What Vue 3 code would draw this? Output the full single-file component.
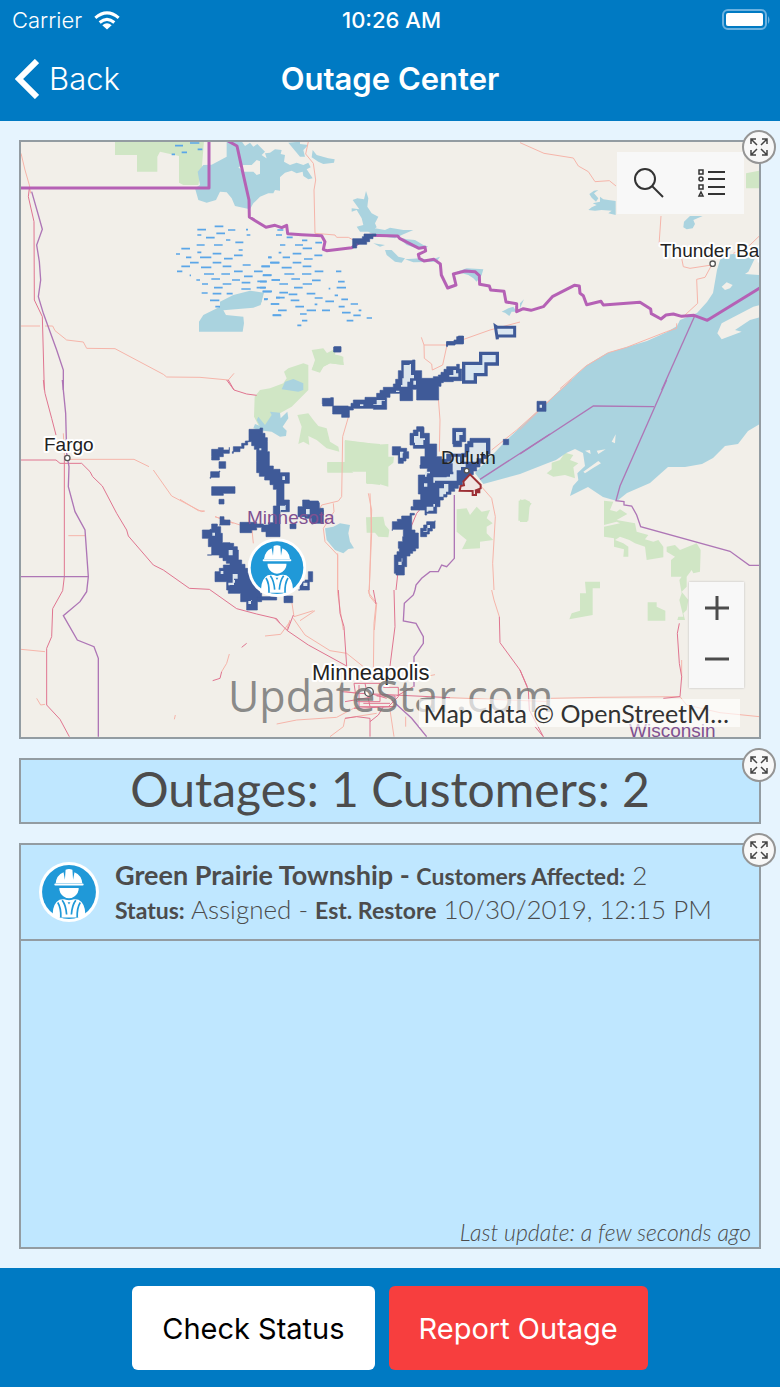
<script setup>
const wetlandWest = [
  [465, 47, 24], [510, 39, 28], [485, 67, 16], [455, 73, 10], [533, 58, 14], [584, 289, 26], [532, 299, 26], [624, 300, 22],
  [678, 299, 6], [532, 315, 12], [589, 310, 26], [680, 315, 11], [558, 323, 26], [618, 330, 13], [646, 337, 24], [530, 345, 24],
  [582, 345, 26], [484, 356, 26], [656, 360, 12], [468, 372, 12], [532, 367, 12], [578, 371, 26], [642, 376, 26], [498, 382, 16],
  [540, 382, 34], [612, 386, 26], [745, 382, 10], [510, 398, 26], [578, 398, 26], [752, 398, 26], [484, 409, 26], [543, 412, 31],
  [608, 409, 26], [668, 405, 24], [725, 409, 24], [471, 424, 16], [642, 424, 26], [702, 424, 26], [552, 432, 30], [604, 432, 26],
  [672, 439, 26], [729, 435, 26], [509, 436, 4], [574, 447, 26], [529, 450, 11], [636, 450, 24], [712, 454, 28], [756, 450, 24],
  [546, 462, 18], [608, 462, 26], [665, 458, 26], [582, 473, 26], [710, 473, 26], [664, 477, 28], [545, 489, 18], [578, 491, 26],
  [620, 491, 18], [728, 484, 28], [570, 511, 28], [586, 530, 14], [732, 507, 12], [753, 522, 24], [758, 555, 24], [768, 503, 12],
]
const wetlandEast = [
  [52, 300, 18], [48, 315, 18], [80, 322, 18], [126, 331, 16], [166, 338, 20], [60, 345, 16], [105, 345, 24], [128, 355, 28],
  [56, 368, 8], [98, 371, 26], [163, 376, 24], [24, 382, 10], [68, 382, 22], [132, 387, 26], [30, 398, 28], [98, 398, 26],
  [4, 409, 26], [65, 413, 30], [128, 409, 26], [164, 424, 26], [228, 424, 16], [8, 436, 26], [73, 432, 30], [126, 432, 28],
  [94, 447, 26], [34, 450, 26], [156, 451, 26], [234, 455, 20], [0, 455, 20], [58, 462, 26], [128, 462, 28], [230, 473, 28],
  [102, 473, 26], [0, 473, 18], [206, 476, 5], [8, 485, 26], [58, 488, 26], [140, 491, 26], [86, 493, 26], [224, 496, 10],
  [48, 503, 26], [164, 504, 24], [244, 508, 20], [12, 508, 10], [92, 511, 26], [196, 514, 26], [32, 522, 26], [164, 523, 8],
  [272, 522, 22], [106, 530, 26], [236, 530, 18], [54, 541, 26], [140, 541, 28], [186, 541, 24], [296, 541, 8], [246, 548, 26],
  [38, 556, 26], [280, 556, 22], [120, 552, 20], [320, 564, 16], [126, 572, 16], [260, 572, 20], [112, 586, 12],
]
const dashes = (rows) => rows.map(([x, y, w]) => `M${x} ${y}h${w}`).join('')

// Territory follows square parcels, so slanted edges are drawn as steps.
const stepped = (rings) => rings.map((ring) => {
  const n = ring.split(' ').map(Number)
  const points = []
  for (let i = 0; i < n.length; i += 2) points.push([n[i], n[i + 1]])
  let d = `M${points[0][0]} ${points[0][1]}`
  points.forEach(([x, y], i) => {
    const [nx, ny] = points[(i + 1) % points.length]
    const steps = Math.max(1, Math.round(Math.min(Math.abs(nx - x), Math.abs(ny - y)) / 9))
    for (let s = 1; s <= steps; s++) {
      d += `H${Math.round(x + ((nx - x) * s) / steps)}V${Math.round(y + ((ny - y) * s) / steps)}`
    }
  })
  return d + 'Z'
}).join('')

const borderArea = stepped([
  '278 326 307 320 312 312 348 318 320 343 292 340 290 354 278 352',
  '221 651 242 651 242 666 221 666',
  '560 635 585 632 590 620 610 618 610 640 585 645 562 650',
])
const westArea = stepped([
  '207 88 240 84 248 100 262 125 262 155 268 155 268 198 280 208 300 218 328 218 328 250 312 250 312 300 328 300 328 335 300 345 300 410 258 410 258 395 245 395 245 382 215 398 180 385 180 367 230 372 250 375 280 360 280 318 290 300 290 268 270 240 238 218 230 185 230 148 215 125 180 155 157 160 160 140 185 130 207 115',
  '95 148 115 143 130 150 148 142 148 160 130 170 118 180 95 170',
  '117 185 137 185 137 205 117 205',
  '92 215 120 213 118 232 90 235',
  '95 260 165 260 165 280 130 280 130 286 95 286',
  '117 298 132 298 132 312 117 312',
  '120 350 130 350 132 360 150 360 150 375 118 375',
  '67 390 90 388 95 372 112 380 122 400 127 428 150 430 172 450 175 480 195 505 210 530 240 580 245 605 232 630 200 630 200 605 182 605 182 580 145 570 140 545 115 545 105 515 130 495 150 490 118 465 82 465 95 440 85 415 67 408',
  '354 320 368 315 368 300 388 303 415 308 418 325 430 340 430 370 400 372 395 355 375 350 354 350',
  '330 372 348 372 348 386 330 386',
  '385 515 398 535 398 545 388 570 355 570 360 545 375 540',
  '312 588 330 588 338 608 320 608',
  '230 590 290 590 290 600 230 600',
])
const eastArea = stepped([
  '37 265 62 263 70 288 115 290 130 270 165 262 200 250 220 232 250 222 257 208 265 182 275 152 307 150 315 182 335 188 335 205 370 200 385 195 410 170 440 163 455 190 455 212 430 215 400 218 386 240 386 270 320 270 320 238 308 238 308 272 270 268 270 250 240 262 230 298 190 295 130 300 118 322 95 312 68 308 68 288 38 282',
  '410 95 432 90 445 78 460 80 460 102 435 104 412 108',
  '73 110 93 110 93 125 73 125',
  '580 388 596 388 596 404 580 404',
  '681 274 708 274 708 304 681 304',
  '300 370 320 350 340 352 342 370 358 375 358 402 380 405 380 440 410 455 410 432 455 430 465 402 480 385 540 386 540 432 520 460 480 505 445 535 400 570 380 610 350 615 345 600 315 600 303 590 310 570 332 570 332 552 325 525 325 495 350 495 352 475 330 465 332 440 345 435 345 415 310 405',
  '247 410 272 415 290 425 296 445 280 460 265 458 265 435 247 435',
  '428 355 467 355 467 395 455 410 430 402',
  '247 635 262 628 275 618 300 610 313 615 305 660 325 678 325 715 300 738 290 770 283 795 258 790 253 735 268 715 265 695 278 680 280 658 247 662',
  '332 655 350 635 375 632 375 655 350 680 332 680',
  '0 575 25 575 25 600 40 605 40 615 0 615',
])
const westGaps = stepped([
  '300 317 315 315 317 330 302 335', '378 327 407 327 407 343 385 343', '146 450 158 450 158 466 146 466',
  '158 522 173 516 173 536 162 548', '145 548 165 540 162 555 150 556', '97 398 105 398 105 407 97 407',
  '307 229 315 229 315 240 307 240', '122 513 130 513 130 522 122 522', '370 548 384 548 382 558 370 558',
  '238 145 244 145 244 151 238 151', '205 603 215 600 213 612 205 612',
])
const eastGaps = stepped([
  '281 165 299 162 303 195 312 205 300 215 292 230 273 225 277 205', '150 283 200 270 225 272 215 285 190 283 160 288',
  '418 195 430 180 445 200', '312 378 325 365 330 385 345 390 340 405 315 398', '438 366 458 366 458 375 448 392 438 392',
  '478 412 490 398 528 400 528 435 500 455 462 442', '370 502 410 500 430 485 428 460 412 455 425 440 450 442 450 462 480 462 440 490 440 512 375 518',
  '388 535 402 522 415 545 400 560', '350 590 375 582 370 602 355 605', '340 663 360 645 352 665',
  '265 755 277 745 275 765', '689 284 696 284 696 293 689 293', '270 425 280 430 278 443 270 438',
  '345 485 360 490 350 500', '342 520 352 520 352 530 342 530', '258 242 268 236 268 246', '310 212 318 212 318 224 310 224',
])
</script>

<template>
  <div class="app">
    <header class="header">
      <div class="status">
        <div class="carrier">
          <span>Carrier</span>
          <svg class="wifi" viewBox="0 0 78 56" aria-hidden="true">
            <path d="M39 55 25 42Q39 31 53 42Z" fill="#fff" />
            <path d="M17 34Q39 15 61 34M4 20Q39-10 74 20" fill="none" stroke="#fff" stroke-width="9" />
          </svg>
        </div>
        <time class="clock">10:26 AM</time>
        <svg class="battery" viewBox="0 0 49 22" aria-hidden="true">
          <rect x="1" y="1" width="43" height="19" rx="5" fill="none" stroke="#6cb2e0" stroke-width="2" />
          <rect x="4" y="4" width="37" height="13" rx="2" fill="#fff" />
          <path d="M46 7q3 4 0 8z" fill="#6cb2e0" />
        </svg>
      </div>
      <nav class="nav">
        <a class="back" href="#">
          <svg viewBox="0 0 24 40" aria-hidden="true"><path d="M22 2 4 20 22 38" fill="none" stroke="#fff" stroke-width="6" /></svg>
          Back
        </a>
        <h1>Outage Center</h1>
      </nav>
    </header>

    <main class="main">
      <section class="panel map-panel" aria-label="Outage map">
        <svg class="map" viewBox="63 426 2214 1785">
          <defs>
            <symbol id="worker" viewBox="0 0 176 176">
              <circle cx="88" cy="88" r="88" fill="#fff" />
              <circle cx="88" cy="88" r="79" fill="#2099d8" />
              <path d="M49 62q2-23 23-32l4 22 2-29q10-5 20 0l2 29 4-22q21 9 23 32z" fill="#fff" />
              <path d="M48 66h80" stroke="#fff" stroke-width="6" stroke-linecap="round" />
              <path d="M40 153q1-32 20-42 12-5 28 2 16-7 28-2 19 10 20 42-8 6-16 10H56q-8-4-16-10Z" fill="#fff" />
              <path d="M57 74h62q1 19-14 29-17 12-34 0-15-10-14-29Z" fill="#fff" stroke="#2099d8" stroke-width="5" />
              <path d="M55 119q10 16 9 44M121 119q-10 16-9 44M68 112q11 14 13 42M108 112q-11 14-13 42" fill="none" stroke="#2099d8" stroke-width="5" />
              <path d="M77 113h22l-11 30z" fill="#fff" />
              <path d="m84 118 4 7 4-7z" fill="#2099d8" />
            </symbol>
          </defs>
          <rect x="63" y="426" width="2214" height="1785" fill="#f2efe9" />

          <!-- woodland -->
          <g class="wood">
            <path transform="translate(60 390)" d="M285 32H552L545 120 535 165H490L477 158V78L420 65 412 80V125H351V75H285Z" />
            <path transform="translate(780 390)" d="M155 660 190 655 200 668 245 678 252 705 210 700 190 710 180 728 155 720 165 690ZM72 725 85 715 130 700 145 705 145 780 125 800 95 830 60 850 30 880 0 895-18 860-16 800 0 780 30 775 70 760 80 745Z" />
            <path transform="translate(540 1200)" d="M240 0 305 0 300 40 240 35ZM352 45 385 40 400 60 415 78 440 85 450 125 475 140 478 155 440 145 410 120 385 108 388 135 370 125 355 132 365 80ZM495 120 558 128 600 132V255L558 250V195L500 200 520 218H442V186H495Z" />
            <path transform="translate(930 930)" d="M104 392 180 400 180 405 235 402V440L252 440 250 458 235 470 235 530 200 520 170 522V485H52V458H104ZM10 120 50 130 78 115 75 135 100 140 100 165 60 160 40 170 30 185 5 178 20 150ZM168 622 220 620 225 645 238 660 235 682 205 680 195 668 170 668ZM440 598 470 595 480 615 500 590 515 605 540 600 530 625 548 640 530 650 530 670 550 690 510 695 510 715 456 718 470 690 440 665ZM626 572 645 568 660 575 655 632H625Z" />
            <path transform="translate(1560 1140)" d="M0 358 35 370 22 390 22 426H0ZM80 280 95 268 95 248 120 240 135 218 160 225 150 240 175 250 160 262 165 295 135 285 100 290ZM252 362 280 365 270 390 290 395 300 388 322 402 290 420 345 430 350 455 385 465 375 478 400 485 415 480 430 500 430 532 380 540 375 500 345 490 328 480 300 470 285 480 310 490 325 500 325 530 310 530 312 508 282 500V475L252 470V440L300 430 290 425 252 435ZM440 500 465 495 480 510 530 490 542 510 540 575 520 580 515 570 500 590 500 620 485 635 505 660 500 690 490 700 495 720H472L475 710 490 710 478 660 485 640 478 600 485 590H453V540L465 530 440 515ZM195 605H240V625H218V705L148 718 155 700 180 692V640H198ZM383 667H410V680L436 692V722H383Z" />
            <path transform="translate(1560 390)" d="M678 130 720 122V175H678Z" />
          </g>

          <!-- lakes -->
          <g class="water">
            <path transform="translate(60 390)" d="M620 34 665 34 675 48 690 38 700 50 712 42 735 65 725 75 738 85 725 95 710 90 695 105 670 105 655 112 670 125 700 125 710 135 725 130 725 115 745 115 750 100 780 78V182L765 180 760 190 745 190 720 200 700 220 690 238 645 228 635 205 620 187 600 185 588 210 560 218 535 210 525 175 540 165 533 125 550 105 575 104 620 80Z" />
            <path transform="translate(60 390)" d="M600 515 640 495 690 482 732 488 722 525 700 533 610 541 618 555 670 560 672 580 668 605H537V575L550 555 600 530Z" />
            <path transform="translate(780 390)" d="M0 78 20 85 15 70 30 68 45 58 65 60 62 72 75 75 72 95 90 105 110 98 130 105 145 98 152 112 140 118 158 145 145 148 130 138 128 125 110 130 95 122 75 128 50 150 28 182 0 192ZM85 38 120 35 120 42 145 45 130 60 135 80 120 80 105 62ZM158 60 170 75 205 85 224 88 222 98 190 102 175 95 155 82Z" />
            <path transform="translate(780 390)" d="M318 183 325 205 322 230 335 250 355 260 345 280 350 292 330 305 300 305 290 290 310 285 305 265 290 240 275 245 275 235 298 238 285 220 278 210 292 205 312 208ZM325 305 345 295 375 300 390 293 430 300 460 300 425 315 405 325 345 316ZM375 360 395 360 415 380 435 385 425 398 405 395 380 375ZM412 320 440 328 465 330 490 345 505 350 480 358 440 345ZM435 388 480 385 510 390 540 380 530 395 460 397ZM725 545 745 535 760 530 770 545 755 545 748 558 735 548ZM340 340 375 345 360 350ZM590 425 620 415 670 418 665 435 650 455 640 445 625 435ZM0 490 8 488 5 515 0 520Z" />
            <path transform="translate(1560 390)" d="M208 192 222 182 235 180 222 190 235 205 228 215 215 203ZM240 200 250 208 265 210 287 213V255L265 250 275 242 245 240 225 242 205 240 215 232 230 225 218 220 240 215ZM492 275 510 258H548L520 270 525 282 518 295 500 298 490 292ZM0 520 12 508 0 535Z" />
            <path transform="translate(780 1140)" d="M75 5 100-3 130 10 130 30 115 35 65 28Z" />
            <path transform="translate(540 1200)" d="M225 72 240 78 230 60 235 50 255 75 275 45 270 35 300 38 302 55 322 35 325 55 308 80 320 92 318 108 300 110 275 95 250 92 220 85ZM435 385 460 380 480 370 510 375 505 400 510 425 522 445 505 447 490 460 465 450 440 420Z" />
            <path d="M1680 1170 1761 1095 1821 1059 1941 1023 2001 996 2031 978 2040 960 2091 939 2121 906 2139 879 2151 810 2160 780 2175 765 2199 762 2240 768 2265 774 2255 795 2245 815 2235 822 2280 825V1272L2244 1293 2214 1332 2175 1338 2139 1374 2106 1392 2055 1401 2004 1401 1950 1449 1881 1479 1851 1503 1809 1491 1764 1461 1710 1488 1719 1458 1735 1440 1732 1420 1755 1398 1749 1359 1725 1347 1700 1358 1668 1380 1644 1389 1560 1422 1450 1452 1425 1419 1520 1320 1680 1170Z" />
            <path class="land" transform="translate(1560 390)" d="M605 470 620 457 638 465 630 475 615 480ZM720 525 700 530 605 580 592 610 605 628 665 605 645 600 690 570 720 562Z" />
            <path class="land" transform="translate(1560 1140)" d="M275 185 287 163 285 190ZM195 212 210 210 212 222ZM230 212 257 208 235 222ZM190 275 235 243 243 250 218 265 195 280Z" />
          </g>
          <path class="marsh" transform="translate(60 390)" :d="dashes(wetlandWest)" />
          <path class="marsh" transform="translate(780 390)" :d="dashes(wetlandEast)" />

          <!-- roads -->
          <g class="road">
            <path transform="translate(60 390)" d="M3 70 15 120 28 165 32 190M3 588H60M75 588H98L105 602 140 630 190 636 200 655 285 656 430 733 440 741 540 742 625 750 642 730" />
            <path transform="translate(780 390)" d="M145 35 137 72 160 100 167 150 162 180 165 310 225 315 230 322 265 322 280 330M484 622 492 645 560 645M492 645 493 685 515 702 517 720 548 705 560 650M600 632 690 600 780 576" />
            <path transform="translate(1560 390)" d="M0 38 72 70 160 84 175 108 205 125 225 155 268 152 288 168M423 258 417 345M485 385 490 410 510 415 575 405 555 442 530 448 533 520 495 555M640 370 690 345 718 318M470 580 470 595 440 605 320 652 265 668 198 708 120 776" />
            <path transform="translate(60 1140)" d="M130 160 134 240M3 808 75 815M150 238H342L387 260M400 270 455 348M455 348 545 395 555 393M585 410 640 430M145 467H195M628 822 620 850 605 875M50 955 62 975 75 973M466 1005 463 1018" />
            <path transform="translate(540 1200)" d="M507 45 488 110 485 290 475 303 425 315 415 335M460 310 462 335 430 385 435 425 473 465V580L490 690M570 280 575 400 567 580 590 610 583 690M0 298 55 332 72 333M105 350 180 375 215 380 220 430M333 590 342 650 400 632M330 660 320 690" />
            <path transform="translate(930 930)" d="M385 265 390 330 388 425M510 525 545 565 556 620 548 760 552 840M720 270 620 360 545 420M175 550 185 600 178 840M83 730V840" />
            <path transform="translate(630 1770)" d="M475 0 480 20 498 42 492 100 490 250M845 0 852 30 868 80M165 138 212 133 240 95M315 62 270 92M250 85 285 135 360 182 410 190 460 230M200 402 260 390 380 382 440 350M440 310 385 300M360 440 400 410 405 385 500 370M540 360 552 440M587 380V410M720 323 1020 335M655 258 675 254" />
            <path transform="translate(1560 1140)" d="M92 955 240 952 480 950M485 840V900M480 950 500 975 600 998 718 1010M155 0 100 50 0 148" />
          </g>
          <g class="highway">
            <path transform="translate(60 390)" d="M28 175 25 200 42 275 43 510 67 560 73 780M625 750 642 780" />
            <path transform="translate(60 1140)" d="M70 0 75 40 95 115 108 165M3 240H108L120 250H185L210 275 218 290 247 318 290 400 320 450 325 468 400 555 430 570 508 625 568 628 650 686 710 702 770 716 780 730M133 228V590L128 632 98 686 95 770 80 805V975L120 1018 148 1070M620 0 642 30 680 42 710 46M665 802 680 790M578 902 600 895 605 875" />
            <path transform="translate(630 1770)" d="M195 85 232 122 295 165 410 228M385 0 390 70 402 110 410 228M552 0 555 110 540 228M868 80 870 158 930 240 955 300 958 360 1000 440M232 122 250 75M490 0 498 42" />
            <path transform="translate(630 1770)" d="M432 280H510V335H440ZM447 285V350H555V318H500M465 280 480 350M520 292H565V320L535 350M480 310 530 325M405 335 480 322M432 355 550 350M405 385 440 380 480 385V440M480 395 505 375 520 350M460 340 540 340M395 305 450 310 720 323M610 290 560 318" />
            <path transform="translate(930 930)" d="M435 515 360 510M258 840 270 730 320 610 380 540" />
            <path transform="translate(1560 1140)" d="M478 730 472 760 478 850 485 890 480 950 430 955M0 870 22 920M45 1040 70 1070" />
          </g>

          <!-- state and national borders -->
          <g class="state">
            <path transform="translate(60 390)" d="M35 185 55 255 67 298 50 345 58 395 62 450 55 500 70 550 110 660 130 720V780" />
            <path transform="translate(60 1140)" d="M127 0 137 100 140 220 147 260 145 320 165 395 195 450 205 590 200 635 180 665 130 707 172 780 222 800 235 835V1070M3 590H205" />
            <path transform="translate(930 930)" d="M510 508 720 372M433 555V745L410 770 395 765 385 785 360 785 335 805 318 825 315 840" />
            <path transform="translate(630 1770)" d="M615 0 610 15 583 40 580 93 618 100 640 140V160L612 200V290M545 330 605 385 650 440" />
            <path transform="translate(1560 390)" d="M523 560 425 780" />
            <path transform="translate(1560 1140)" d="M440 0 300 318 288 362 312 365V375L335 378 350 405 362 440 630 514 688 556H718M0 222 220 78 402 80" />
          </g>
          <path class="nation" d="M60 564H627V423M684 423 711 438 729 520 747 600 748 651 798 682 825 676 845 683 860 676 863 701 905 704 965 707 975 725 970 748 980 752 1055 743 1110 706 1193 708 1200 716 1257 745 1275 742 1277 753 1255 763 1258 775 1272 783 1302 778 1321 792 1324 825 1343 864 1368 855 1360 822 1395 813 1425 815 1438 827 1439 853 1468 858 1472 870 1512 874 1518 906 1550 911V935L1570 926 1593 931 1630 920 1657 890 1723 856 1738 858 1740 880 1750 887 1760 914 1803 904 1810 915 1920 907 1952 927 1954 941 1983 957 1998 945 2020 942 2045 949 2082 946 2122 961 2280 864" />

          <!-- service territory -->
          <g transform="translate(780 390)">
            <path class="area" :d="borderArea" />
            <path class="outline" d="M706 588 712 592H764V618H712V628Z" />
          </g>
          <g transform="translate(540 1200)">
            <path class="area" :d="westArea" />
            <path class="pale" :d="westGaps" />
          </g>
          <g transform="translate(930 930)">
            <path class="area" :d="eastArea" />
            <path class="pale" :d="eastGaps" />
            <path class="outline wide" d="M461 160H512V130H562V162H528V194H496V216H461Z" />
            <path class="alert" d="M449 542 452 528 462 526 460 515 480 493 512 525V535L495 542H508V547H498V555H488V543Z" />
          </g>

          <!-- place names -->
          <g class="places">
            <text x="132" y="1353">Fargo</text>
            <text x="1980" y="770">Thunder Bay</text>
            <text class="faint" x="1323" y="1392">Duluth</text>
            <text class="region" x="741" y="1572">Minnesota</text>
            <text class="region" x="1887" y="2211">Wisconsin</text>
            <text class="city" x="936" y="2040">Minneapolis</text>
          </g>
          <g class="dots">
            <circle cx="202" cy="1374" r="8" />
            <circle cx="2138" cy="791" r="8" />
            <circle cx="1400" cy="1412" r="7" />
            <circle cx="1107" cy="2076" r="13" />
          </g>
          <text class="watermark" x="684" y="2136">UpdateStar.com</text>
          <use href="#worker" x="743" y="1615" width="176" height="176" />
        </svg>

        <div class="tools">
          <button type="button" aria-label="Search">
            <svg viewBox="0 0 32 32"><g fill="none" stroke="#333" stroke-width="2"><circle cx="12" cy="12" r="10" /><path d="m19 19 11 11" /></g></svg>
          </button>
          <button type="button" aria-label="Legend">
            <svg viewBox="0 0 32 32"><g fill="none" stroke="#333" stroke-width="2"><path d="M12 5h17M12 12h17M12 20h17M12 27h17" /><path d="M3 3h4v4H3zM3 18h4v4H3zM5 25l2 4H3z" stroke-width="1.5" /><circle cx="5" cy="12" r="2" stroke-width="1.5" /></g></svg>
          </button>
        </div>
        <div class="zoom">
          <button type="button" aria-label="Zoom in"><svg viewBox="0 0 24 24"><path d="M0 12h24M12 0v24" stroke="#4c4c4c" stroke-width="3" /></svg></button>
          <button type="button" aria-label="Zoom out"><svg viewBox="0 0 24 24"><path d="M0 12h24" stroke="#4c4c4c" stroke-width="3" /></svg></button>
        </div>
        <div class="credit">Map data © OpenStreetM…</div>
        <button class="expand" type="button" aria-label="Expand map">
          <svg viewBox="0 0 20 20"><path id="arrows" d="M2 7V2h5M2 2l6 6M13 2h5v5M18 2l-6 6M2 13v5h5M2 18l6-6M13 18h5v-5M18 18l-6-6" /></svg>
        </button>
      </section>

      <section class="panel summary">
        <h2>Outages: 1 Customers: 2</h2>
        <button class="expand" type="button" aria-label="Expand summary"><svg viewBox="0 0 20 20"><use href="#arrows" /></svg></button>
      </section>

      <section class="panel list">
        <article class="item">
          <svg class="badge" viewBox="0 0 176 176" aria-hidden="true"><use href="#worker" width="176" height="176" /></svg>
          <div>
            <p><b class="place">Green Prairie Township - </b><b>Customers Affected:</b> 2</p>
            <p><b>Status:</b> Assigned - <b>Est. Restore</b> 10/30/2019, 12:15 PM</p>
          </div>
        </article>
        <p class="updated">Last update: a few seconds ago</p>
        <button class="expand" type="button" aria-label="Expand outage list"><svg viewBox="0 0 20 20"><use href="#arrows" /></svg></button>
      </section>
    </main>

    <footer class="footer">
      <button class="action" type="button">Check Status</button>
      <button class="action report" type="button">Report Outage</button>
    </footer>
  </div>
</template>

<style>
body {
  margin: 0;
}
</style>

<style scoped>
.app {
  min-height: 100vh;
  display: flex;
  flex-direction: column;
  background: #e6f4fe;
  color: #4c4c4c;
  font-family: Lato, "Open Sans", sans-serif;
}
button {
  padding: 0;
  border: 0;
  background: none;
  font: inherit;
  color: inherit;
  display: flex;
  align-items: center;
  justify-content: center;
}
h1, h2, p {
  margin: 0;
}
.header {
  height: 121px;
  background: #007ac3;
  color: #fff;
  font-family: Inter, "Liberation Sans", sans-serif;
}
.status {
  height: 40px;
  padding: 0 9px 0 12px;
  display: grid;
  grid-template-columns: 1fr auto 1fr;
  align-items: center;
  font-size: 22px;
}
.carrier {
  display: flex;
  align-items: center;
  gap: 12px;
  font-weight: 300;
}
.wifi {
  width: 26px;
  height: 19px;
}
.clock {
  font-weight: 500;
}
.battery {
  width: 49px;
  height: 22px;
  justify-self: end;
}
.nav {
  height: 77px;
  display: grid;
  grid-template-columns: 1fr auto 1fr;
  align-items: center;
}
.nav h1 {
  font-size: 31px;
  font-weight: 600;
}
.back {
  padding-left: 15px;
  display: flex;
  align-items: center;
  gap: 10px;
  color: #fff;
  font-size: 31px;
  font-weight: 300;
  text-decoration: none;
}
.back svg {
  width: 24px;
  height: 40px;
}
.main {
  flex: 1;
  padding: 19px;
  display: flex;
  flex-direction: column;
  gap: 19px;
}
.panel {
  position: relative;
  border: 2px solid #939ca2;
  background: #bfe7ff;
}
.map {
  display: block;
  width: 100%;
}
.wood { fill: #d0e6c5; }
.water { fill: #aad3df; }
.water .land { fill: #f2efe9; }
.marsh { stroke: #5ba6e8; stroke-width: 5; }
.road { fill: none; stroke: #f6b5aa; stroke-width: 3; }
.highway { fill: none; stroke: #e07590; stroke-width: 3; }
.state { fill: none; stroke: #ae76b6; stroke-width: 4; }
.nation { fill: none; stroke: #b561b5; stroke-width: 9; stroke-linejoin: round; }
.area { fill: #3f5a98; stroke: #3f5a98; stroke-width: 2; }
.pale { fill: #dbe4ec; }
.outline { fill: #dbe7f1; stroke: #3f5a98; stroke-width: 9; }
.wide { stroke-width: 10; }
.alert { fill: #f1e5e3; stroke: #9c2f35; stroke-width: 6; }
.places {
  fill: #222;
  stroke: #fff;
  stroke-width: 12;
  stroke-linejoin: round;
  paint-order: stroke;
  font-family: "Liberation Sans", Arial, sans-serif;
  font-size: 57px;
}
.places .city { font-size: 66px; }
.places .faint { stroke: none; }
.places .region { stroke: none; fill: #805191; }
.dots { fill: #fff; stroke: #555; stroke-width: 4; }
.watermark {
  font-family: "Open Sans", "Noto Sans", sans-serif;
  font-size: 129px;
  fill: #737373;
  fill-opacity: 0.82;
}
.tools {
  position: absolute;
  top: 10px;
  right: 15px;
  width: 127px;
  height: 62px;
  display: flex;
  background: #f8f8f8;
}
.tools button {
  flex: 1;
}
.tools svg {
  width: 32px;
  height: 32px;
}
.zoom {
  position: absolute;
  right: 15px;
  bottom: 49px;
  width: 55px;
  height: 102px;
  padding-bottom: 4px;
  display: flex;
  flex-direction: column;
  background: #f8f8f8;
  box-shadow: 0 0 2px #bbb;
}
.zoom button {
  flex: 1;
}
.zoom svg {
  width: 24px;
  height: 24px;
}
.credit {
  position: absolute;
  right: 19px;
  bottom: 10px;
  padding: 0 11px 0 5px;
  background: rgba(255, 255, 255, 0.65);
  color: #323232;
  font-size: 25px;
  line-height: 28px;
}
.expand {
  position: absolute;
  top: -12px;
  right: -17px;
  width: 34px;
  height: 34px;
  border: 2px solid #959595;
  border-radius: 50%;
  background: #f8f8f8;
}
.expand svg {
  width: 20px;
  height: 20px;
  fill: none;
  stroke: #444;
  stroke-width: 1.5;
}
.summary h2 {
  padding-bottom: 4px;
  font-size: 48px;
  font-weight: 400;
  line-height: 58px;
  text-align: center;
}
.list {
  flex: 1;
  display: flex;
  flex-direction: column;
}
.item {
  padding: 13px 18px;
  display: flex;
  align-items: center;
  gap: 16px;
  border-bottom: 2px solid #939ca2;
  font-size: 26px;
  font-weight: 300;
  line-height: 34px;
}
.item p {
  height: 34px;
}
.item b {
  font-size: 23px;
  font-weight: 700;
}
.item .place {
  font-size: 27px;
}
.badge {
  flex: none;
  width: 60px;
  height: 60px;
}
.updated {
  margin-top: auto;
  padding: 0 8px 3px;
  text-align: right;
  font-size: 23px;
  font-style: italic;
  font-weight: 300;
  line-height: 24px;
}
.footer {
  padding: 18px 0 17px;
  display: flex;
  justify-content: center;
  gap: 14px;
  background: #007ac3;
  font-family: Inter, "Liberation Sans", sans-serif;
}
.action {
  height: 84px;
  padding: 0 30px;
  border-radius: 6px;
  background: #fff;
  color: #000;
  font-size: 29px;
}
.report {
  background: #f73e3e;
  color: #fff;
}
</style>
